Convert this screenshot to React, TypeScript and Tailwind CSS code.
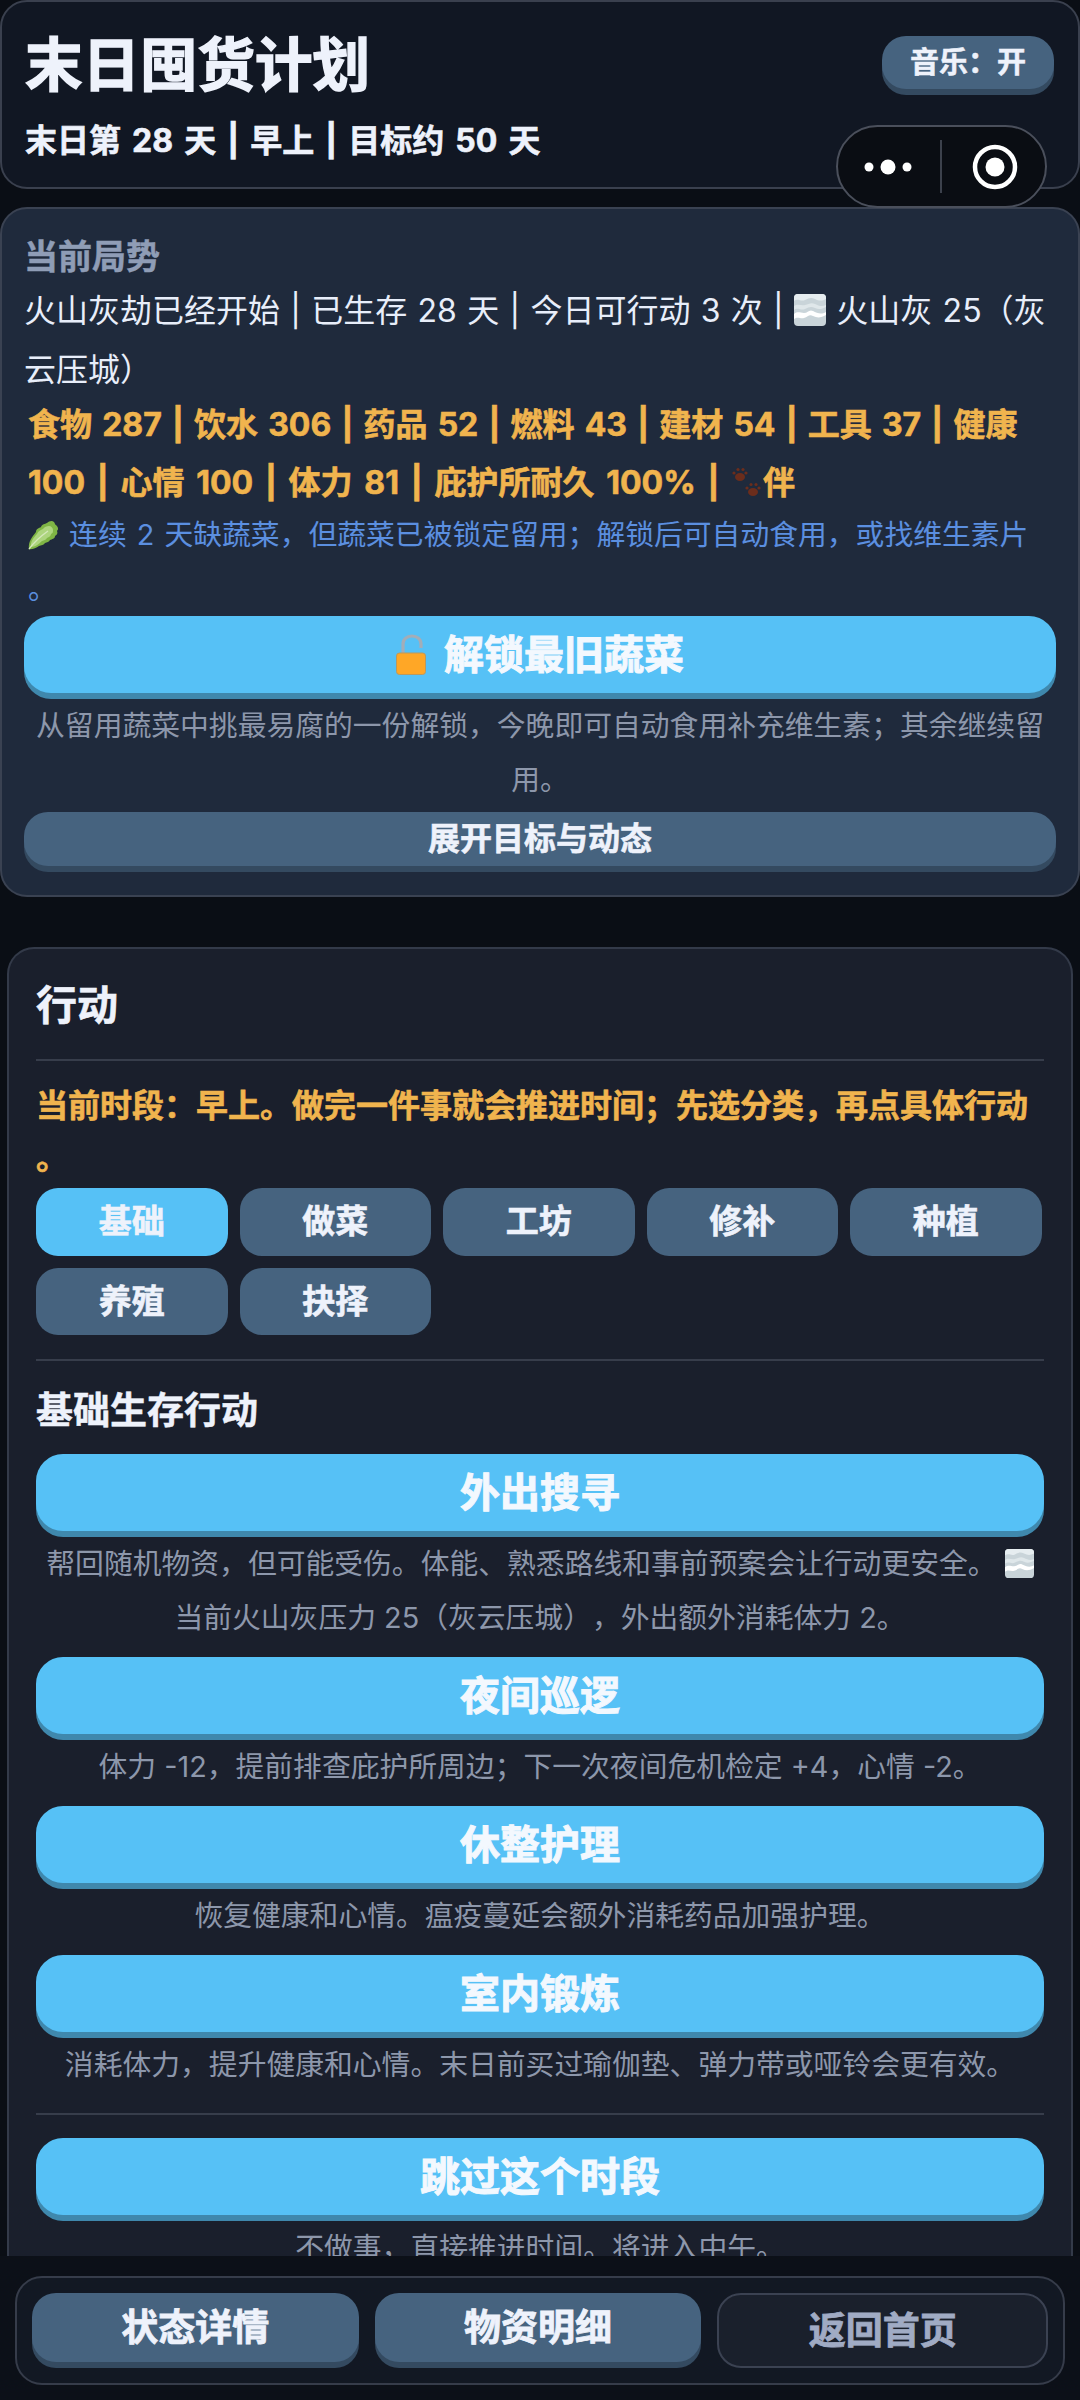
import React from "react";

const FONT = { fontFamily: '"Inter","Noto Sans CJK SC","Noto Sans",sans-serif' };

function FogIcon({ size = 32 }: { size?: number }) {
  return (
    <svg width={size} height={size} viewBox="0 0 32 32" className="inline-block align-[-4px]">
      <rect width="32" height="32" rx="4" fill="#c9d4d9" />
      <path d="M0 7c4-3 7 1 11-1s6-3 10-1 7 2 11 0V4a4 4 0 0 0-4-4H4a4 4 0 0 0-4 4z" fill="#e6edf0" />
      <path d="M0 16c4-3 7 1 11-1s6-3 10-1 7 1 11-1v-2c-4 2-7 1-11-1s-6 0-10 1-7-2-11 1z" fill="#dfe7ea" />
      <path d="M0 25c4-3 6 0 10-1s5-4 9-2 8 2 13-1v-3c-5 3-9 1-13-1s-5 2-9 2-6-2-10 1z" fill="#ffffff" />
    </svg>
  );
}

function LeafIcon() {
  return (
    <svg width="31" height="30" viewBox="0 0 31 30" className="inline-block align-[-5px]">
      <path d="M1 29C0 22 4 17 8 12c0-3 3-4 5-5 1-3 4-3 6-4 2-2 5-3 7-1 1 1 1 3 2 3 2 2 3 4 1 6 1 2 0 4-2 5 0 3-3 3-5 4-1 2-3 2-5 3-1 2-4 2-6 3-3 2-7 4-11 3z" fill="#7fb545" />
      <path d="M3 27c-1-4 2-9 6-13 1-3 4-4 6-5 1-2 4-3 6-3 2 0 4 2 4 4s0 3-2 4c0 2-2 3-4 4-1 2-3 2-5 3-3 3-7 6-11 6z" fill="#add57e" />
      <path d="M1 29c6-8 12-13 19-18" stroke="#d5e8bc" strokeWidth="1.4" fill="none" />
    </svg>
  );
}

function PawIcon() {
  return (
    <svg width="32" height="32" viewBox="0 0 32 32" className="inline-block align-[-5px]">
      <g fill="#6b2d1c">
        <ellipse cx="9" cy="10" rx="5" ry="4" />
        <circle cx="3" cy="6" r="1.6" />
        <circle cx="7" cy="2.5" r="1.6" />
        <circle cx="12" cy="2.5" r="1.6" />
        <circle cx="15" cy="6" r="1.6" />
        <ellipse cx="22" cy="25" rx="5" ry="4" />
        <circle cx="16" cy="21" r="1.6" />
        <circle cx="20" cy="17.5" r="1.6" />
        <circle cx="25" cy="17.5" r="1.6" />
        <circle cx="28" cy="21" r="1.6" />
      </g>
    </svg>
  );
}

function LockIcon() {
  return (
    <svg width="30" height="41" viewBox="0 0 30 41" className="inline-block">
      <path d="M7 20V10C7 5 11 2 16 2s9 3 9 8v4" stroke="#a3adb8" strokeWidth="3.2" fill="none" />
      <rect x="0.5" y="19" width="29" height="21.5" rx="3" fill="#ffa726" stroke="#b9995f" strokeWidth="1" />
    </svg>
  );
}

function Blue({ children, mt = "" }: { children: React.ReactNode; mt?: string }) {
  return (
    <button className={`block w-full h-[77px] rounded-[27px] bg-[#56c1f6] shadow-[0_6px_0_#3f88ad] text-[40px] font-bold text-[#f3f8fe] [-webkit-text-stroke:1px_#f3f8fe] ${mt}`}>
      {children}
    </button>
  );
}

function Desc({ children }: { children: React.ReactNode }) {
  return <p className="mt-[6px] text-center text-[28.8px] leading-[54px] text-[#8d97ab]">{children}</p>;
}

const tabs = ["基础", "做菜", "工坊", "修补", "种植", "养殖", "抉择"];

export default function App() {
  return (
    <div style={FONT} className="h-[2400px] w-[1080px] flex flex-col overflow-hidden bg-[#0a0e15] text-[#eef2fb] [text-spacing-trim:space-all]">
      <main className="relative flex-1 min-h-0 overflow-hidden flex flex-col">
        {/* header */}
        <header className="h-[189px] shrink-0 rounded-[27px] border-2 border-[#3a404e] bg-[#111723] pl-[23px] pr-[24px] flex justify-between">
          <div>
            <h1 className="mt-[24px] text-[57.5px] leading-[78px] font-bold [-webkit-text-stroke:1.5px_#eef2fb]">末日囤货计划</h1>
            <p className="mt-[15px] text-[32px] leading-[44px] font-bold [word-spacing:3.5px] [-webkit-text-stroke:0.6px_#eef2fb]">末日第 28 天 | 早上 | 目标约 50 天</p>
          </div>
          <button className="mt-[34px] w-[172px] h-[53px] rounded-[24px] bg-[#46637f] shadow-[0_6px_0_#344a60] text-[29px] font-bold [-webkit-text-stroke:0.5px_#eef2fb]">音乐：开</button>
        </header>

        {/* capsule */}
        <div className="absolute left-[836px] top-[125px] w-[211px] h-[83px] rounded-full border-2 border-[#4a4f5b] bg-[#0a0d13] z-10">
          <svg width="211" height="83" viewBox="0 0 211 83" className="absolute left-[-2px] top-[-2px]">
            <circle cx="33" cy="42" r="4.5" fill="#fff" />
            <circle cx="52" cy="42" r="7.5" fill="#fff" />
            <circle cx="71" cy="42" r="4.5" fill="#fff" />
            <line x1="105" y1="15" x2="105" y2="68" stroke="#3c414c" strokeWidth="2" />
            <circle cx="159" cy="42" r="20" stroke="#fff" strokeWidth="4.5" fill="none" />
            <circle cx="159" cy="42" r="9.5" fill="#fff" />
          </svg>
        </div>

        {/* status */}
        <section className="mt-[18px] h-[690px] shrink-0 rounded-[27px] border-2 border-[#3a4252] bg-[#1f2a3c] px-[22px] pt-[24px]">
          <h2 className="text-[34px] leading-[48px] font-bold text-[#8f9db6] [-webkit-text-stroke:0.5px_#8f9db6]">当前局势</h2>
          <p className="text-[32px] leading-[59px] text-[#e8eefa] [word-spacing:1.3px] whitespace-nowrap">
            火山灰劫已经开始 | 已生存 28 天 | 今日可行动 3 次 | <FogIcon /> 火山灰 25（灰<br />云压城）
          </p>
          <p className="-mt-[3px] px-[4px] text-[32px] leading-[58px] font-bold text-[#f0b44e] [-webkit-text-stroke:0.6px_#f0b44e] whitespace-nowrap">
            <span className="[word-spacing:2.6px]">食物 287 | 饮水 306 | 药品 52 | 燃料 43 | 建材 54 | 工具 37 | 健康</span><br />
            <span className="[word-spacing:4.2px]">100 | 心情 100 | 体力 81 | 庇护所耐久 100% | <PawIcon />伴</span>
          </p>
          <p className="-mt-[4px] px-[4px] text-[28.8px] leading-[54px] text-[#5b8fe0] [word-spacing:2px]">
            <LeafIcon /> 连续 2 天缺蔬菜，但蔬菜已被锁定留用；解锁后可自动食用，或找维生素片<br />。
          </p>
          <Blue mt="flex items-center justify-center gap-[18px]">
            <LockIcon />
            <span>解锁最旧蔬菜</span>
          </Blue>
          <Desc>
            从留用蔬菜中挑最易腐的一份解锁，今晚即可自动食用补充维生素；其余继续留<br />用。
          </Desc>
          <button className="mt-[5px] block w-full h-[54px] rounded-[24px] bg-[#46637f] shadow-[0_6px_0_#344a60] text-[32px] font-bold [-webkit-text-stroke:0.6px_#eef2fb]">展开目标与动态</button>
        </section>

        {/* actions */}
        <section className="mt-[50px] mx-[7px] flex-1 min-h-0 rounded-t-[27px] border-2 border-b-0 border-[#333a49] bg-[#1a1f2c] px-[27px] pt-[27px]">
          <h2 className="text-[41px] leading-[58px] font-bold [-webkit-text-stroke:0.6px_#eef2fb]">行动</h2>
          <div className="mt-[25px] h-[2px] bg-[#373d4b]" />
          <p className="mt-[19px] text-[32px] leading-[52px] font-bold text-[#f0b44e] [-webkit-text-stroke:0.6px_#f0b44e]">
            当前时段：早上。做完一件事就会推进时间；先选分类，再点具体行动<br />。
          </p>
          <div className="mt-[4px] flex flex-wrap gap-x-[12px] gap-y-[12px]">
            {tabs.map((t, i) => (
              <button
                key={t}
                className={`w-[191.5px] h-[67.5px] rounded-[22px] text-[33px] font-bold [-webkit-text-stroke:0.6px_#eef2fb] ${i === 0 ? "bg-[#56c1f6]" : "bg-[#46637f]"}`}
              >
                {t}
              </button>
            ))}
          </div>
          <div className="mt-[24px] h-[2px] bg-[#373d4b]" />
          <h3 className="mt-[24px] text-[37px] leading-[52px] font-bold [-webkit-text-stroke:0.5px_#eef2fb]">基础生存行动</h3>
          <div className="mt-[17px]">
            <Blue>外出搜寻</Blue>
            <Desc>
              帮回随机物资，但可能受伤。体能、熟悉路线和事前预案会让行动更安全。 <FogIcon size={29} /><br />
              当前火山灰压力 25（灰云压城），外出额外消耗体力 2。
            </Desc>
            <Blue mt="mt-[12px]">夜间巡逻</Blue>
            <Desc>体力 -12，提前排查庇护所周边；下一次夜间危机检定 +4，心情 -2。</Desc>
            <Blue mt="mt-[12px]">休整护理</Blue>
            <Desc>恢复健康和心情。瘟疫蔓延会额外消耗药品加强护理。</Desc>
            <Blue mt="mt-[12px]">室内锻炼</Blue>
            <Desc>消耗体力，提升健康和心情。末日前买过瑜伽垫、弹力带或哑铃会更有效。</Desc>
            <div className="mt-[21px] h-[2px] bg-[#373d4b]" />
            <Blue mt="mt-[23px]">跳过这个时段</Blue>
            <Desc>不做事，直接推进时间。将进入中午。</Desc>
          </div>
        </section>
      </main>

      {/* bottom bar */}
      <footer className="h-[144px] shrink-0 bg-[#0c1018] px-[15px] pt-[20px]">
        <div className="h-[109px] rounded-[27px] border-2 border-[#363c4a] bg-[#121823] px-[15px] pt-[15px] flex gap-[16px]">
          <button className="flex-1 h-[69px] rounded-[24px] bg-[#46637f] shadow-[0_6px_0_#344a60] text-[37px] font-bold [-webkit-text-stroke:0.8px_#eef2fb]">状态详情</button>
          <button className="flex-1 h-[69px] rounded-[24px] bg-[#46637f] shadow-[0_6px_0_#344a60] text-[37px] font-bold [-webkit-text-stroke:0.8px_#eef2fb]">物资明细</button>
          <button className="flex-1 h-[75px] rounded-[24px] border-2 border-[#3b4252] bg-[#1a202c] text-[37px] font-bold text-[#a0abc4] [-webkit-text-stroke:0.8px_#a0abc4]">返回首页</button>
        </div>
      </footer>
    </div>
  );
}
